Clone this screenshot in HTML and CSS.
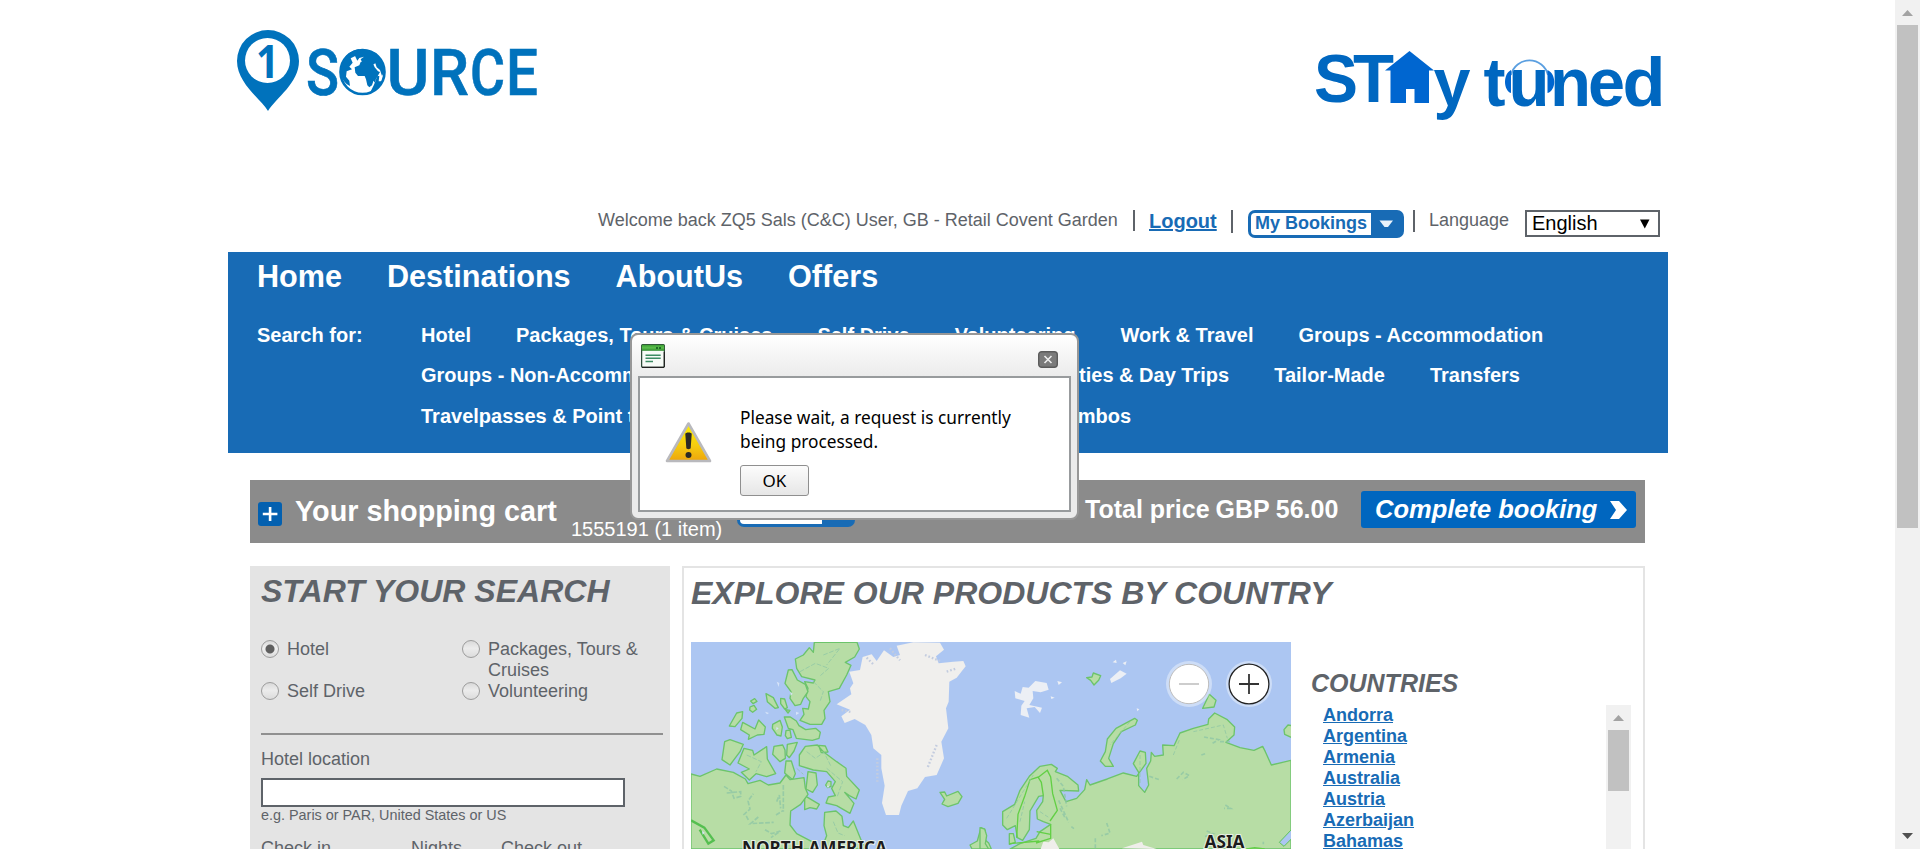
FILE: index.html
```html
<!DOCTYPE html>
<html lang="en">
<head>
<meta charset="utf-8">
<title>1Source - Stay tuned</title>
<link rel="stylesheet" href="styles.css">
</head>
<body>
<div class="window">
  <div class="page">
    <header class="header">
      <svg class="logo" width="312" height="100" viewBox="230 20 312 100">
        <path fill="#0072bc" d="M268 111C260 98 237 83 237 61a31 31 0 0 1 62 0C299 83 276 98 268 111z"/>
        <circle cx="267.500" cy="60.500" r="22.500" fill="#fff"/>
        <g class="logo-one">
          <text x="256" y="77.500" font-size="47" textLength="23" lengthAdjust="spacingAndGlyphs">1</text>
        </g>
        <g class="logo-word" font-size="64.500">
          <text x="306" y="94.500" textLength="33" lengthAdjust="spacingAndGlyphs">S</text>
          <text x="386.500" y="94.500" textLength="43" lengthAdjust="spacingAndGlyphs">U</text>
          <text x="430" y="94.500" textLength="39" lengthAdjust="spacingAndGlyphs">R</text>
          <text x="470" y="94.500" textLength="35" lengthAdjust="spacingAndGlyphs">C</text>
          <text x="506" y="94.500" textLength="32" lengthAdjust="spacingAndGlyphs">E</text>
        </g>
        <circle cx="362.500" cy="72" r="22" fill="#fff" stroke="#0072bc" stroke-width="2.600"/>
        <g transform="translate(220 10) scale(.33333)" fill="#0072bc">
          <path d="M362 190C360 150 385 122 418 117L412 135 392 145 398 158 388 170 396 178 380 184 378 200 388 212 390 228C376 222 364 208 362 190z"/>
          <path d="M404 172l14-6 4-10 12-4 10 4 14 2 6 14 10 12 6 2-8 14-4 8-8 6-4 12-8 6-6-6-4-18-4-10-20 0-8-10z"/>
          <path d="M404 136l8-12 30-4 26 10 18 24 8 30-8 14-6-18-10-8-4-12-14 8-12-8-14-4-4-8 10-8-14 4-6 8z"/>
          <path d="M462 224l10-26 6 0-2 16 10 0c-8 16-22 28-36 34z"/>
          <path d="M462 206l4-4 1 10-5 6z"/>
        </g>
      </svg>
      <svg class="stay" width="360" height="90" viewBox="1308 40 360 90">
        <g class="stay-word" font-size="69">
          <text x="1314" y="101.500" textLength="44" lengthAdjust="spacingAndGlyphs">S</text>
          <text x="1353" y="101.500" textLength="41" lengthAdjust="spacingAndGlyphs">T</text>
          <text x="1433.500" y="106" textLength="37" lengthAdjust="spacingAndGlyphs">y</text>
          <text x="1483.500" y="106" textLength="22" lengthAdjust="spacingAndGlyphs">t</text>
          <text x="1508.500" y="106" textLength="41" lengthAdjust="spacingAndGlyphs">u</text>
          <text x="1550" y="106" textLength="41" lengthAdjust="spacingAndGlyphs">n</text>
          <text x="1588" y="106" textLength="37" lengthAdjust="spacingAndGlyphs">e</text>
          <text x="1622.500" y="106" textLength="43" lengthAdjust="spacingAndGlyphs">d</text>
        </g>
        <path fill="#0066d0" d="M1409.500 51L1434 70.500h-5V103h-14.500V89h-8.500v14H1390.500V70.500H1385z"/>
        <path fill="none" stroke="#5b9fe0" stroke-width="1.800" d="M1511 75a19 19 0 0 1 37 0"/>
        <path fill="#0066d0" d="M1511 70v23c-8-3-8-19 0-23zM1547.500 70v23c9-3 9-19 0-23z"/>
      </svg>
    </header>

    <div class="userbar">
      <span class="welcome">Welcome back ZQ5 Sals (C&amp;C) User, GB - Retail Covent Garden</span>
      <i class="sep sep-a"></i>
      <a class="logout">Logout</a>
      <i class="sep sep-b"></i>
      <div class="bookings"><span>My Bookings</span><svg width="33" height="28" viewBox="0 0 33 28"><path fill="#e9f3fb" d="M8.500 10.500h13.500l-5 6.500h-3.500z"/></svg></div>
      <i class="sep sep-c"></i>
      <span class="lang">Language</span>
      <div class="select"><span>English</span><svg width="10" height="10" viewBox="0 0 10 10"><path d="M0 .5h9.500L4.800 9.500z"/></svg></div>
    </div>

    <nav class="nav">
      <div class="nav-main"><a>Home</a><a>Destinations</a><a>AboutUs</a><a>Offers</a></div>
      <div class="nav-search">
        <span class="nav-label">Search for:</span>
        <div class="nav-rows">
          <div class="nav-row"><a>Hotel</a><a>Packages, Tours &amp; Cruises</a><a>Self Drive</a><a>Volunteering</a><a>Work &amp; Travel</a><a>Groups - Accommodation</a></div>
          <div class="nav-row row-two"><a class="grow">Groups - Non-Accommodation</a><a>Activities &amp; Day Trips</a><a>Tailor-Made</a><a>Transfers</a></div>
          <div class="nav-row row-three"><a class="grow">Travelpasses &amp; Point to Point</a><a>Combos</a></div>
        </div>
      </div>
    </nav>

    <section class="cart">
      <svg class="cart-plus" width="24" height="24" viewBox="0 0 24 24"><rect width="24" height="24" rx="3" fill="#0360b0"/><path fill="#fff" d="M10.800 5h2.600v5.800h6v2.400h-6V19h-2.600v-5.800h-6v-2.400h6z"/></svg>
      <h2 class="cart-title">Your shopping cart</h2>
      <span class="cart-items">1555191 (1 item)</span>
      <div class="cart-btn"><span></span></div>
      <div class="total"><span>Total price</span><span>GBP</span><span>56.00</span></div>
      <a class="complete"><span>Complete booking</span><svg width="18" height="19" viewBox="0 0 18 19"><path fill="#fff" d="M0 0h9l8 9-8 9H0l6-9z"/></svg></a>
    </section>

    <div class="columns">
      <section class="search">
        <h1 class="title">START YOUR SEARCH</h1>
        <div class="radios">
          <label><i class="radio on"></i><span>Hotel</span></label>
          <label><i class="radio"></i><span>Packages, Tours &amp; Cruises</span></label>
          <label><i class="radio"></i><span>Self Drive</span></label>
          <label><i class="radio"></i><span>Volunteering</span></label>
        </div>
        <div class="rule"></div>
        <div class="field-label">Hotel location</div>
        <div class="input"></div>
        <div class="hint">e.g. Paris or PAR, United States or US</div>
        <div class="dates"><span>Check in</span><span>Nights</span><span>Check out</span></div>
      </section>

      <section class="explore">
        <h1 class="title">EXPLORE OUR PRODUCTS BY COUNTRY</h1>
        <div class="explore-body">
          <svg class="map" width="600" height="207" viewBox="0 0 600 207">
            <defs>
              <filter id="shade" x="-20%" y="-20%" width="140%" height="140%"><feGaussianBlur stdDeviation="5"/></filter>
              <filter id="soft" x="-5%" y="-5%" width="110%" height="110%"><feGaussianBlur stdDeviation="1"/></filter>
            </defs>
            <rect width="600" height="207" fill="#acc6f2"/>
            <g transform="translate(-11 -87) scale(.33333)">
              <g class="land">
                <path d="M403 262L531 262 538 282 524 306 496 322 513 331 500 360 478 400 445 410 450 440 432 466 435 490 425 508 390 508 360 496 372 478 368 460 385 462 390 440 378 425 384 400 374 380 400 384 405 375 365 365 350 340 346 312 370 300 388 278 400 292z"/>
                <path d="M325 345L336 344 352 375 376 388 384 410 370 430 362 448 345 452 330 430 333 410 315 385z"/>
                <path d="M258 416L280 428 295 458 285 460 262 440zM302 430l12 2 8 26-8 4-12-16zM212 438l12-7 7 8-12 7zM210 456l12-5 8 12-12 9-9-7zM170 474L188 470 186 490 165 515 148 513z"/>
                <path d="M188 502L225 522 236 495 256 516 252 538 232 540 205 553 208 540 182 524zM278 508l22-12 7 20-4 27-12-3-14-20zM318 527l12-2 4 22-12 4-6-9zM313 486l18 0 18 12 8 14 20 12 30-4 14 12-4 18-20 6-48-6-10-26-14-4zM316 464l14 2-6 8z"/>
                <path d="M134 560L150 554 190 568 180 590 150 630 126 614zM192 580L218 586 222 600 260 575 262 612 287 656 260 665 228 656 208 675 184 652 208 642 174 624z"/>
                <path d="M282 574L308 570 315 585 316 610 300 620 278 598zM322 568l30-6-10 26-14 20-8-8zM318 618l16 0 12 38-8 18-24-20z"/>
                <path d="M376 574L412 570 430 590 470 620 498 640 500 664 538 705 528 732 508 722 494 712 522 745 510 775 470 752 438 744 445 726 466 722 455 700 466 680 440 650 400 645 358 632 358 600zM416 571l20 2 8 18-20 2zM384 650l24 4 4 36-14 22-20-10zM444 678l9 2 0 14-10 4-6-8zM374 722l44 26-8 14-20-4-16 6z"/>
                <path d="M33 657L60 664 110 642 160 652 196 672 204 686 240 676 265 690 300 684 318 660 330 674 372 668 376 700 384 718 362 748 332 768 330 810 350 836 400 862 400 882 33 882z"/>
                <path d="M434 772L468 768 486 784 490 812 505 818 520 798 546 862 560 882 424 882 440 842 432 812z"/>
                <path d="M780 712l14-1 6 12 34-14 12 16-12 20-30 10-18-8 8-14zM903 818l13 8-6 24 16 14 8 18-58 0-6-12 22-12z"/>
              </g>
              <path fill="none" stroke="#55bf50" stroke-width="7" d="M33 796l40 22 28 38-16 10-26-42"/>
              <g filter="url(#soft)">
                <path fill="#f0efed" d="M548 306L575 298 590 318 612 286 640 306 660 300 650 272 700 262 780 263 792 284 768 304 776 325 820 320 850 318 857 334 830 368 808 380 806 440 798 460 805 520 784 560 792 610 770 660 735 666 712 700 684 708 664 752 657 780 618 780 606 744 614 692 604 640 604 600 580 580 574 540 556 510 524 492 494 504 484 484 510 464 470 448 514 418 510 400 520 385 508 350 540 345z"/>
                <path fill="none" stroke="#c3ccdf" stroke-width="7" stroke-dasharray="5 6" d="M770 570l-28 70M592 610v70M560 308l22 22M630 280l30 36M735 300l45 18M800 350l30-10M485 465l28 6"/>
              </g>
              <g class="hills" stroke-dasharray="14 5">
                <path d="M132 694l22 14 8 22 20-6 0-14-42 4M190 780l20-18-6-24 16-22M205 795l-10-20M235 786l-24 20 70-4M255 824l20 12 26-8-28 20M290 740l8-20 4 40M310 690v80M288 780l22-14"/>
                <path stroke-width="3" d="M360 350l46-25 40 15-25 22M430 300l50-20-40 50M400 380l30 30-10 30M380 590l26 20 26-18 20 40M200 600l44 20-16 30M440 640l48 40-16 44M350 640l20 18M460 800l14 34 20 8"/>
              </g>
              <g fill="#d6e3f8"><path d="M290 380l8 4-2 12zM330 410l8 6-6 6zM348 470l10 4-10 6zM255 470l6 8 6-4zM290 515l6 6-8 4zM440 692l8 0-4 8zM66 828l8 5-6 6z"/></g>
            </g>
            <g transform="translate(289 -87) scale(.33333)">
              <g fill="#eceff5" filter="url(#soft)"><path d="M104 408L122 416 128 396 146 398 166 378 200 384 206 404 182 412 158 408 160 430 148 450 186 458 180 474 164 456 140 460 148 488 122 480 124 452 134 438 106 430z"/><path d="M390 372l30-26 20 10-18 14-28 14zM428 324l12-5-4 12zM398 322l10-8 2 10zM212 424l12 4-10 4zM232 378l14 4-10 8zM470 460l8 3-6 6z"/></g>
              <g class="land">
                <path d="M320 368l16-2 4-12 22 8-6 14-14 14-10-14zM668 460l20-42 20 18-6 20zM912 524l12-14 12 2 0 36-22-10z"/>
                <path d="M464 490L472 496 466 510 424 530 400 566 386 610 400 634 376 634 361 618 376 590 382 552 408 520z"/>
                <path d="M933 616L874 630 856 590 848 574 822 586 780 578 738 562 762 540 764 516 742 494 704 474 686 492 684 508 640 520 600 534 582 572 548 570 550 600 524 604 514 592 512 618 500 640 506 690 494 712 476 692 476 652 460 626 480 588 496 592 498 625 470 664 430 654 382 672 330 690 320 674 314 704 290 730 258 740 240 706 296 708 294 690 262 664 226 650 232 640 214 628 180 634 148 664 120 706 104 748 68 770 68 810 82 824 106 812 112 848 128 856 148 824 150 768 176 724 190 722 188 740 170 766 172 792 190 800 212 808 180 830 168 850 120 866 90 882 933 882z"/>
                <path d="M88 836l12 0 6 26-18 6zM0 818l14 4 6 20-4 24 10 16-26 0z"/>
              </g>
              <path fill="#efeeeb" d="M182 882l8-22 16 2 14-12 18 32zM426 880l60-20 4 10 40 12z"/>
              <g class="borders"><path d="M110 848l4-70 20-54 16-50 24-8 10 16 6 40M176 666l26-20 10 20 6 50 14 50-22 32M212 808v42l-44 14M170 830l42 8M88 866l90-8M800 882l24-4 30 4"/></g>
              <g class="hills" stroke-dasharray="12 6">
                <path d="M230 670l20 24 10 60M240 760l16 30M590 672l20-20 18 10-20 12M508 664l30 10M672 546l44 8-20 12M736 750l16 10-20 0M380 804l10 30-26 8M346 850v32M680 828l20 8-30 10M664 600l12-4M720 560l30 0M274 815l8 6M850 860v8M236 736l30 66"/>
                <path stroke-width="3" d="M450 500l-60 70M480 600v90M80 790l80-130M120 800l14-60M180 770l30 20M580 600l20-50M640 530l90-20 12 40"/>
              </g>
              <path fill="#acc6f2" stroke="#5cc35a" stroke-width="3" d="M936 822L898 862 912 874 936 850z"/>
            </g>
            <text class="map-label" x="51" y="211.500" textLength="145" lengthAdjust="spacingAndGlyphs">NORTH AMERICA</text>
            <text class="map-label" x="513.500" y="206" textLength="40" lengthAdjust="spacingAndGlyphs">ASIA</text>
            <circle cx="498" cy="42" r="23" fill="#fff" opacity=".4"/><circle cx="498" cy="42" r="19.700" fill="#fff" stroke="#bdbdbd"/><path stroke="#bdbdbd" stroke-width="1.500" d="M488 42h20"/>
            <circle cx="558" cy="42" r="23" fill="#fff" opacity=".4"/><circle cx="558" cy="42" r="19.900" fill="#fff" stroke="#222" stroke-width="1.300"/><path stroke="#333" stroke-width="1.800" d="M548 42h20M558 32v20"/>
          </svg>
          <div class="countries">
            <h3>COUNTRIES</h3>
            <div class="country-box">
              <ul><li>Andorra</li><li>Argentina</li><li>Armenia</li><li>Australia</li><li>Austria</li><li>Azerbaijan</li><li>Bahamas</li></ul>
              <div class="scroll list-scroll"><svg width="11" height="6" viewBox="0 0 11 6"><path fill="#a3a3a3" d="M0 6L5.500 0 11 6z"/></svg><i></i></div>
            </div>
          </div>
        </div>
      </section>
    </div>
  </div>

  <div class="scroll page-scroll">
    <svg width="11" height="6" viewBox="0 0 11 6"><path fill="#a3a3a3" d="M0 6L5.500 0 11 6z"/></svg>
    <i></i>
    <svg class="down" width="11" height="6" viewBox="0 0 11 6"><path fill="#505050" d="M0 0h11L5.500 6z"/></svg>
  </div>

  <div class="dialog">
    <div class="dialog-bar">
      <svg width="24" height="24" viewBox="0 0 24 24">
        <defs><linearGradient id="g1" x2="0" y2="1"><stop offset="0" stop-color="#3a9a35"/><stop offset=".5" stop-color="#5cc04c"/><stop offset="1" stop-color="#2f8a30"/></linearGradient></defs>
        <rect x=".6" y=".6" width="22.800" height="22.800" rx="1.500" fill="#f7fbf7" stroke="#2d4a38" stroke-width="1.300"/>
        <rect x=".8" y=".8" width="22.400" height="6" fill="url(#g1)"/>
        <path fill="#1f6b25" d="M15 3h2v2h-2zM18 3h2v2h-2z"/>
        <path stroke="#3c8b63" stroke-width="1.400" d="M4.500 11.300h15.200M4.500 14.300h15.200M4.500 17.500h7.500"/>
        <path stroke="#222" stroke-width="1.200" d="M1 23.300h22M23.300 8v15"/>
      </svg>
      <svg class="close" width="20" height="17" viewBox="0 0 20 17"><rect x=".7" y=".7" width="18.600" height="15.600" rx="3" fill="#7b7b7b" stroke="#5c5c5c" stroke-width="1.400"/><path stroke="#eee" stroke-width="1.600" d="M6.500 5l7 7M13.500 5l-7 7"/></svg>
    </div>
    <div class="dialog-body">
      <svg width="48" height="43" viewBox="0 0 48 43">
        <defs><linearGradient id="g2" x2="0" y2="1"><stop offset="0" stop-color="#fff200"/><stop offset=".6" stop-color="#f5cb10"/><stop offset="1" stop-color="#eea50c"/></linearGradient></defs>
        <path fill="url(#g2)" stroke="#b9b9bd" stroke-width="2.600" stroke-linejoin="round" d="M23.500 2.500L45 40H2z"/>
        <path fill="#2a2a26" d="M20.300 13c0-2 6.400-2 6.400 0l-1 14c0 1.500-4.400 1.500-4.400 0z"/><circle cx="23.500" cy="34" r="3" fill="#2a2a26"/>
      </svg>
      <div class="dialog-msg">
        <p><span class="line-one">Please wait, a request is currently</span><br><span class="line-two">being processed.</span></p>
        <button>OK</button>
      </div>
    </div>
  </div>
</div>
</body>
</html>
```
FILE: styles.css
```css
* { box-sizing: border-box; }
body { margin: 0; background: #fff; color: #5e6369; font-family: "Liberation Sans", Arial, sans-serif; font-size: 18px; line-height: 21px; overflow: hidden; }
h1, h2, h3, p, ul { margin: 0; padding: 0; list-style: none; }
svg { display: block; flex: none; }
.window { position: relative; display: flex; width: 1920px; height: 849px; overflow: hidden; }
.page { flex: none; width: 1440px; margin-left: 228px; margin-right: 227px; }
.header { display: flex; justify-content: space-between; height: 200px; }
.logo { margin: 20px 0 0 2px; }
.stay { margin: 40px 0 0; }
.logo-word { fill: #0072bc; stroke: #0072bc; stroke-width: .6; font-family: Roboto, sans-serif; font-weight: 500; }
.logo-one { fill: #0072bc; font-family: "Open Sans", sans-serif; font-weight: 700; }
.stay-word { fill: #0067c0; font-weight: 700; }

.userbar { display: flex; align-items: flex-start; height: 52px; padding: 10px 0 0 370px; white-space: nowrap; }
.welcome { width: 520px; }
.sep { width: 2px; background: #5e6369; flex: none; }
.sep-a { height: 21px; margin-left: 15px; }
.sep-b { height: 23px; margin-left: 13px; }
.sep-c { height: 22px; margin-left: 9px; }
.logout { width: 69px; margin: 1px 0 0 14px; font-size: 20px; font-weight: 700; color: #186bb5; text-decoration: underline; }
.bookings { display: flex; width: 156px; height: 28px; margin-left: 15px; border-radius: 7px; background: #186bb5; color: #186bb5; font-weight: 700; }
.bookings span { width: 120px; height: 22px; margin: 3px 0 0 3px; padding-left: 4px; border-radius: 4px 0 0 4px; background: #fff; line-height: 20px; }
.lang { width: 81px; margin-left: 14px; }
.select { display: flex; justify-content: space-between; width: 135px; height: 27px; margin-left: 15px; border: 2px solid #5e6369; padding: 0 8px 0 5px; color: #000; font-size: 20px; line-height: 22px; }
.select svg { margin-top: 7px; }

.nav { height: 201px; padding: 6px 0 0 29px; background: #186bb5; color: #fff; font-weight: 700; white-space: nowrap; }
.nav-main { display: flex; gap: 45px; height: 65px; font-size: 30.600px; line-height: 36px; }
.nav-search { display: flex; font-size: 20px; line-height: 24px; }
.nav-label { width: 164px; }
.nav-rows { width: 1140px; }
.nav-row { display: flex; gap: 45px; height: 40px; }
.row-two { width: 1099px; height: 41px; }
.row-three { width: 710px; }
.grow { flex: 1; }

.cart { display: flex; align-items: flex-start; width: 1395px; height: 63px; margin: 27px 0 0 22px; background: #8b8b8b; color: #fff; white-space: nowrap; }
.cart-plus { margin: 22px 0 0 8px; }
.cart-title { width: 278px; margin: 14px 0 0 13px; font-size: 28.800px; line-height: 34px; }
.cart-items { width: 166px; margin: 38px 0 0; font-size: 20px; line-height: 22px; margin-left: -2px; }
.cart-btn { width: 118px; height: 28px; margin-top: 19px; padding: 3px; border-radius: 7px; background: #186bb5; }
.cart-btn span { display: block; width: 82px; height: 22px; border-radius: 4px 0 0 4px; background: #fff; }
.total { display: flex; gap: 6px; width: 276px; margin: 15px 0 0 230px; font-size: 25px; font-weight: 700; line-height: 28px; }
.complete { display: flex; justify-content: space-between; width: 275px; height: 37px; margin-top: 11px; padding: 0 8px 0 14px; border-radius: 3px; background: #0066bf; font-size: 25.500px; font-weight: 700; font-style: italic; line-height: 36px; }
.complete svg { margin-top: 10px; }

.columns { display: flex; margin: 23px 0 0 22px; gap: 12px; }
.title { font-size: 32px; line-height: 36px; font-style: italic; white-space: nowrap; }
.search { width: 420px; height: 283px; padding: 7px 0 0 11px; background: #e4e4e4; overflow: hidden; }
.radios { display: grid; grid-template-columns: 201px 180px; height: 94px; margin-top: 30px; align-content: start; }
.radios label { display: flex; align-items: flex-start; gap: 8px; }
.radio { flex: none; width: 18px; height: 18px; margin-top: 1px; border: 1px solid #9c9c9c; border-radius: 50%; background: linear-gradient(#d9d9d9, #ececec 45%, #dcdcdc); }
.radio.on { background: radial-gradient(circle, #5f5f5f 0 4px, transparent 5px), linear-gradient(#d9d9d9, #f0f0f0 45%, #dcdcdc); }
.rule { width: 402px; height: 2px; background: #909090; }
.field-label { margin-top: 14px; }
.input { width: 364px; height: 29px; margin-top: 8px; border: 2px solid #5e6369; background: #fff; }
.hint { font-size: 14.400px; line-height: 17px; }
.dates { display: flex; margin-top: 14px; }
.dates span { width: 150px; }
.dates span:nth-child(2) { width: 90px; }

.explore { width: 963px; height: 300px; padding: 7px 0 0 7px; border: 2px solid #e4e4e4; }
.explore-body { display: flex; margin-top: 31px; }
.countries { width: 342px; margin: 27px 0 0 20px; }
.countries h3 { font-size: 25px; line-height: 28px; font-style: italic; }
.country-box { display: flex; justify-content: space-between; margin-top: 8px; width: 320px; }
.country-box ul { padding-left: 12px; color: #186bb5; font-weight: 700; text-decoration: underline; }

.scroll { display: flex; flex-direction: column; align-items: center; flex: none; width: 25px; background: #f1f1f1; }
.scroll i { width: 21px; background: #c1c1c1; }
.page-scroll { height: 849px; padding: 10px 0; }
.page-scroll i { height: 503px; margin-top: 9px; }
.page-scroll .down { margin-top: auto; }
.list-scroll { height: 200px; padding-top: 10px; }
.list-scroll i { height: 61px; margin-top: 9px; }

.dialog { position: absolute; left: 630px; top: 333px; width: 449px; height: 187px; padding: 0 8px; border: 2px solid #979797; border-radius: 8px; background: linear-gradient(#fff, #ebebeb 42px); color: #000; font-family: "Noto Sans", "Open Sans", sans-serif; }
.dialog-bar { display: flex; justify-content: space-between; height: 41px; padding: 9px 11px 0 1px; }
.dialog-bar .close { margin-top: 7px; }
.dialog-body { display: flex; width: 433px; height: 136px; margin-left: -2px; padding: 43px 0 0 25px; border: 2px solid #989b9d; background: #fff; }
.dialog-msg { margin: -15px 0 0 27px; white-space: nowrap; }
.dialog-msg p { line-height: 24px; font-size: 17.300px; }
.dialog-msg button { display: block; width: 69px; height: 31px; margin-top: 11px; padding: 0; border: 1px solid #8f8f8f; border-radius: 3px; background: linear-gradient(#fcfcfc, #e6e6e6); color: #000; font: 17px/26px "Noto Sans", sans-serif; }

.land { fill: #b7dda5; stroke: #6cc46b; stroke-width: 4; stroke-linejoin: round; }
.borders { fill: none; stroke: #62cf45; stroke-width: 4; }
.hills { fill: none; stroke: #8dc5a5; stroke-width: 5; opacity: .75; }
.map-label { font: 700 17px "Noto Sans", sans-serif; fill: #1c1c1c; stroke: #e8f0e4; stroke-width: 2px; paint-order: stroke; }
```
